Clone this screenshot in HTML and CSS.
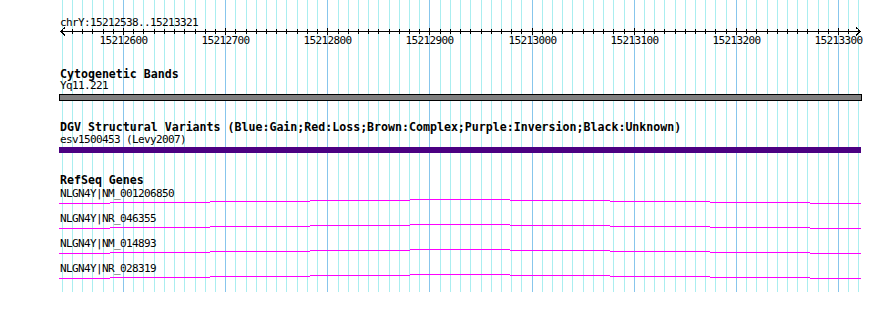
FILE: index.html
```html
<!DOCTYPE html>
<html lang="en">
<head>
    <meta charset="UTF-8">
    <meta name="viewport" content="width=device-width, initial-scale=1.0">
    <title>chrY:15212538..15213321</title>
    <link rel="stylesheet" href="styles.css">
</head>
<body>
    <svg class="panel" width="890" height="335" viewBox="0 0 890 335">
        <defs>
            <path id="intron" d="M59 203.5H110M110 202.5H210M210 201.5H310M310 200.5H410M410 199.5H510M510 200.5H610M610 201.5H710M710 202.5H810M810 203.5H861"/>
        </defs>

        <!-- grid lines, filled in by tracks.js -->
        <g id="grid"></g>

        <!-- ruler -->
        <text class="small" x="60" y="26">chrY:15212538..15213321</text>
        <line class="axis" x1="60" y1="31.5" x2="861" y2="31.5"/>
        <path class="axis" d="M65 27.5L60.5 31.5L65 35.5"/>
        <path class="axis" d="M856 27.5L860.5 31.5L856 35.5"/>
        <g id="ticks"></g>

        <!-- Cytogenetic Bands -->
        <text class="title" x="60" y="78">Cytogenetic Bands</text>
        <text class="small" x="60" y="89">Yq11.221</text>
        <rect class="band" x="59.5" y="94.5" width="802" height="6"/>

        <!-- DGV -->
        <text class="title" x="60" y="131">DGV Structural Variants (Blue:Gain;Red:Loss;Brown:Complex;Purple:Inversion;Black:Unknown)</text>
        <text class="small" x="60" y="143">esv1500453 (Levy2007)</text>
        <rect class="variant" x="59" y="147" width="802" height="6"/>

        <!-- RefSeq Genes -->
        <text class="title" x="60" y="184">RefSeq Genes</text>
        <text class="small" x="60" y="197">NLGN4Y|NM_001206850</text>
        <use class="gene" href="#intron"/>
        <text class="small" x="60" y="222">NLGN4Y|NR_046355</text>
        <use class="gene" href="#intron" transform="translate(0 25)"/>
        <text class="small" x="60" y="247">NLGN4Y|NM_014893</text>
        <use class="gene" href="#intron" transform="translate(0 50)"/>
        <text class="small" x="60" y="272">NLGN4Y|NR_028319</text>
        <use class="gene" href="#intron" transform="translate(0 75)"/>
    </svg>

    <script src="tracks.js"></script>
</body>
</html>
```

FILE: styles.css
```css
body {
    margin: 0;
    background: #fff;
}
.panel {
    display: block;
}
.panel text {
    fill: #000;
}
.small {
    font-family: "DejaVu Sans Mono", monospace;
    font-size: 11px;
    letter-spacing: -0.62px;
}
.title {
    font-family: "DejaVu Sans Mono", monospace;
    font-size: 11.6px;
    font-weight: bold;
}
.tick-label {
    text-anchor: middle;
}
.axis {
    stroke: #000;
    stroke-width: 1;
    fill: none;
    shape-rendering: crispEdges;
}
.grid-minor {
    stroke: #aaeef0;
    shape-rendering: crispEdges;
}
.grid-major {
    stroke: #87c6ec;
    shape-rendering: crispEdges;
}
.band {
    fill: #808080;
    stroke: #000;
    shape-rendering: crispEdges;
}
.variant {
    fill: #4b0082;
    shape-rendering: crispEdges;
}
.gene {
    stroke: #ff00ff;
    fill: none;
    shape-rendering: crispEdges;
}
```

FILE: tracks.js
```js
const SVG_NS = 'http://www.w3.org/2000/svg';
const END = 15213321;

// 100bp is about 102px on this panel
function bpToX(bp) {
    return Math.round(123 + (bp - 15212600) * 1.02143);
}

function addEl(parent, tag, attrs, text) {
    const el = document.createElementNS(SVG_NS, tag);
    for (const key in attrs) {
        el.setAttribute(key, attrs[key]);
    }
    if (text !== undefined) el.textContent = text;
    parent.appendChild(el);
    return el;
}

function drawRuler() {
    const grid = document.getElementById('grid');
    const ticks = document.getElementById('ticks');

    for (let bp = 15212540; bp <= END; bp += 10) {
        const x = bpToX(bp) + 0.5;
        const major = bp % 100 === 0;

        addEl(grid, 'line', { x1: x, y1: 0, x2: x, y2: 292, class: major ? 'grid-major' : 'grid-minor' });
        addEl(ticks, 'line', { x1: x, y1: major ? 28 : 29, x2: x, y2: major ? 35 : 34, class: 'axis' });

        if (major) {
            addEl(ticks, 'text', { x: x, y: 44, class: 'small tick-label' }, bp);
        }
    }
}

drawRuler();
```
